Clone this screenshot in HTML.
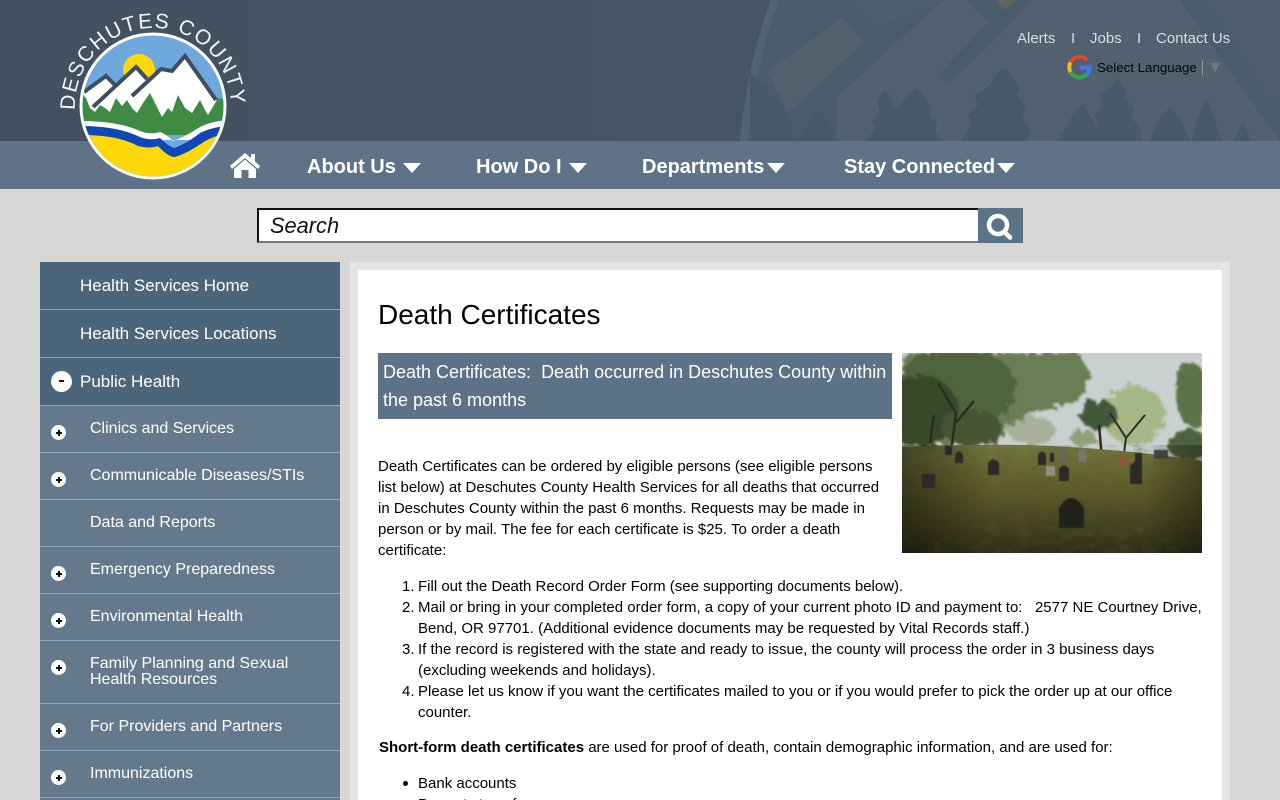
<!DOCTYPE html>
<html lang="en"><head><meta charset="utf-8"><title>Death Certificates</title>
<style>
html,body{margin:0;padding:0;width:1280px;height:800px;overflow:hidden;background:#d7d7d5;font-family:"Liberation Sans",sans-serif;color:#000}
#w{position:relative;width:1280px;height:800px;overflow:hidden}
.a{position:absolute;white-space:nowrap}
a{color:inherit;text-decoration:none}
#hdr{position:absolute;left:0;top:0;width:1280px;height:141px;background:linear-gradient(90deg,#43505f 0,#465464 55%,#4c5c6b 100%);overflow:hidden}
#nav{position:absolute;left:0;top:141px;width:1280px;height:48px;background:#5f7287}
.n{position:absolute;top:154px;font-size:20px;font-weight:bold;color:#fff;line-height:26px;white-space:nowrap}
.tri{position:absolute;top:163px;width:0;height:0;border-left:9px solid transparent;border-right:9px solid transparent;border-top:10px solid #fff}
.top{position:absolute;top:29.500px;font-size:15px;line-height:18px;color:#d8dee4;white-space:nowrap}
.s{position:absolute;left:40px;width:300px;box-sizing:border-box;border-bottom:1px solid #8fa6bb;color:#fff}
.s1{background:#4b667b;height:48px;font-size:17px;line-height:47px;padding-left:40px}
.s2{background:#65798d;font-size:16px;padding-left:50px;line-height:16px;padding-top:15px}
.p{position:absolute;left:51px;width:15px;height:15px;border-radius:50%;background:#fff}
.p:before{content:"";position:absolute;left:4.500px;top:6.500px;width:6px;height:2px;background:#111}
.p:after{content:"";position:absolute;left:6.500px;top:4.500px;width:2px;height:6px;background:#111}
.t{position:absolute;font-size:15px;line-height:21px;white-space:nowrap}
</style></head><body><div id="w">

<div id="hdr">
<svg width="1280" height="141" style="position:absolute;left:0;top:0">
<path d="M775 0Q752 60 744 141H1280V0Z" fill="#4a5c6c"/>
<path d="M775 0Q752 60 744 141" fill="none" stroke="#526373" stroke-width="8"/>
<path d="M767 72L842 18L864 42L788 113Z" fill="#53616f"/>
<path d="M837 97L943 0H967L988 23L935 78L950 83L1030 5L1035 0H1180L1263 118L1280 141H837Z" fill="#52606f"/>
<path d="M850 0L880 25L943 0Z" fill="#4c5e6e"/>
<path d="M995 0H1016L1005 10Z" fill="#5d6660"/>
<path d="M1205 0H1280V100L1270 100Z" fill="#4c5c6b"/>
<path d="M750 141V72L767 88L772 100L778 97L782 108L785 114L790 122L797 141Z" fill="#465966"/>
<path d="M798 141L812 118L820 108L827 120L838 141Z" fill="#465966"/>
<path d="M867 141L875 128L872 120L880 112L877 100L885 90L892 100L893 110L900 106L908 95L917 88L925 98L932 108L930 116L937 122L935 132L944 141Z" fill="#465966"/>
<path d="M960 141L972 125L968 115L978 105L975 95L990 85L998 72L1005 68L1014 78L1020 88L1017 95L1026 108L1022 118L1030 128L1027 141Z" fill="#465966"/>
<path d="M1058 141L1068 125L1072 115L1084 104L1092 120L1097 130L1100 141Z" fill="#485a67"/>
<path d="M1095 141L1098 125L1094 115L1102 105L1100 96L1110 88L1118 78L1126 90L1125 98L1134 108L1132 118L1141 130V141Z" fill="#485a67"/>
<path d="M1150 141L1156 125L1170 106L1182 122L1190 141Z" fill="#485a67"/>
<path d="M1192 141L1198 118L1207 98L1214 118L1222 141Z M1233 141L1243 122L1252 141Z" fill="#485a67"/>
</svg>
</div>
<div id="nav"></div>

<a class="top" style="left:1017px">Alerts</a>
<span class="top" style="left:1071px">I</span>
<a class="top" style="left:1090px">Jobs</a>
<span class="top" style="left:1137px">I</span>
<a class="top" style="left:1156px">Contact Us</a>

<svg class="a" style="left:1067px;top:55px" width="25" height="25" viewBox="0 0 25 25">
<path d="M20 5A10 10 0 0 0 3.500 7.500" fill="none" stroke="#e8481f" stroke-width="4"/>
<path d="M3.500 7.500A10 10 0 0 0 3.500 17" fill="none" stroke="#f6b80b" stroke-width="4"/>
<path d="M3.500 17A10 10 0 0 0 19 20" fill="none" stroke="#35a74d" stroke-width="4"/>
<path d="M19 20Q22.500 17 22.500 12.500H12.500" fill="none" stroke="#3b7fe6" stroke-width="4"/>
</svg>
<div class="a" style="left:1097px;top:59px;font-size:13.300px;line-height:17px;color:#050505">Select Language</div>
<div class="a" style="left:1202px;top:60px;width:1px;height:15px;background:#8e989f"></div>
<div class="a" style="left:1210px;top:63px;width:0;height:0;border-left:5px solid transparent;border-right:5px solid transparent;border-top:10px solid #70767a"></div>

<svg class="a" style="left:50px;top:0" width="210" height="190" viewBox="50 0 210 190">
<defs>
<clipPath id="c"><circle cx="153" cy="106" r="70.500"/></clipPath>
<path id="arc" d="M75.100 110A78 78 0 1 1 230.200 117"/>
</defs>
<text font-family="Liberation Sans,sans-serif" font-size="21" letter-spacing="1.500" fill="#f4f6f8"><textPath href="#arc">DESCHUTES COUNTY</textPath></text>
<circle cx="153" cy="106" r="73.500" fill="#fff"/>
<g clip-path="url(#c)">
<rect x="80" y="30" width="150" height="150" fill="#6fa8dc"/>
<circle cx="139" cy="70" r="16" fill="#ffd809"/>
<path d="M84 92L106 76L117 86L136 67L148 80L161 69L172 71L185 56L220 105V120H84Z" fill="#fff"/>
<path d="M84 92L106 76L116 86M93 107L136 67L147 79M132 96L161 69L172 71L185 56L216 100" fill="none" stroke="#3d4e62" stroke-width="4"/>
<path d="M80 92L86 98L90 108L95 112L100 105L105 108L110 112L116 98L122 106L127 100L132 108L137 113L143 103L150 93L156 105L162 117L168 108L172 112L178 95L185 108L192 113L200 100L205 110L208 115L214 105L218 98L228 100V135H80Z" fill="#3f8b43"/>
<path d="M80 121Q118 121 140 131Q150 135 160 132Q166 134 173 141Q185 137 200 127Q212 121 228 120V140H80Z" fill="#fff"/>
<path d="M80 126Q118 126 140 137Q150 141 160 138Q168 146 174 148Q186 144 200 133Q212 127 228 126V185H80Z" fill="#0f47b4"/>
<path d="M80 135Q118 135 138 146Q150 149 158 146Q168 157 175 157Q188 153 202 143Q214 135 228 134V185H80Z" fill="#ffd809"/>
</g>
</svg>

<svg class="a" style="left:229px;top:152px" width="32" height="27" viewBox="0 0 32 27">
<path d="M16 1L1 14L3 17L16 6L29 17L31 14L26 9.500V2H22V6Z" fill="#fff"/>
<path d="M5 17L16 7.500L27 17V26H19.500V18H12.500V26H5Z" fill="#fff"/>
</svg>

<a class="n" style="left:307px">About Us</a><div class="tri" style="left:403px"></div>
<a class="n" style="left:476px">How Do I</a><div class="tri" style="left:569px"></div>
<a class="n" style="left:642px">Departments</a><div class="tri" style="left:767px"></div>
<a class="n" style="left:844px">Stay Connected</a><div class="tri" style="left:997px"></div>

<div class="a" style="left:257px;top:208px;width:721px;height:35px;box-sizing:border-box;background:#fff;border-top:2px solid #111;border-left:2px solid #111;border-bottom:2px solid #777"></div>
<div class="a" style="left:270px;top:212px;font-size:21.800px;font-style:italic;line-height:27px;color:#111">Search</div>
<div class="a" style="left:978px;top:208px;width:45px;height:35px;background:#5a7389"></div>
<svg class="a" style="left:983px;top:211px" width="32" height="30" viewBox="0 0 32 30">
<circle cx="15" cy="14" r="9" fill="none" stroke="#fff" stroke-width="4.500"/>
<path d="M21.500 21L27 26.500" stroke="#fff" stroke-width="4.500" stroke-linecap="round"/>
</svg>

<a class="s s1" style="top:262px">Health Services Home</a>
<a class="s s1" style="top:310px">Health Services Locations</a>
<a class="s s1" style="top:358px">Public Health</a>
<a class="s s2" style="top:406px;height:47px">Clinics and Services</a>
<a class="s s2" style="top:453px;height:47px">Communicable Diseases/STIs</a>
<a class="s s2" style="top:500px;height:47px">Data and Reports</a>
<a class="s s2" style="top:547px;height:47px">Emergency Preparedness</a>
<a class="s s2" style="top:594px;height:47px">Environmental Health</a>
<a class="s s2" style="top:641px;height:63px">Family Planning and Sexual<br>Health Resources</a>
<a class="s s2" style="top:704px;height:47px">For Providers and Partners</a>
<a class="s s2" style="top:751px;height:47px">Immunizations</a>
<div class="s s2" style="top:798px;height:2px;padding:0;border:0"></div>

<div class="a" style="left:51px;top:371px;width:21px;height:21px;border-radius:50%;background:#fff"></div>
<div class="a" style="left:59px;top:380px;width:5px;height:2px;background:#111"></div>
<div class="p" style="top:425px"></div>
<div class="p" style="top:472px"></div>
<div class="p" style="top:566px"></div>
<div class="p" style="top:613px"></div>
<div class="p" style="top:660px"></div>
<div class="p" style="top:723px"></div>
<div class="p" style="top:770px"></div>

<div class="a" style="left:350px;top:262px;width:880px;height:538px;background:#e4e4e3"></div>
<div class="a" style="left:358px;top:270px;width:864px;height:530px;background:#fff"></div>

<div class="a" style="left:378px;top:298px;font-size:28px;line-height:34px">Death Certificates</div>
<div class="a" style="left:378px;top:353px;width:514px;height:66px;background:#5c7287"></div>
<div class="a" style="left:383px;top:358px;font-size:18px;line-height:28px;color:#fff">Death Certificates:&nbsp; Death occurred in Deschutes County within<br>the past 6 months</div>

<svg class="a" style="left:902px;top:353px" width="300" height="200" viewBox="0 0 300 200">
<defs>
<linearGradient id="g" x1="0" x2="0" y1="0" y2="1"><stop offset="0" stop-color="#74773f"/><stop offset=".45" stop-color="#5a5a2a"/><stop offset="1" stop-color="#2e2d18"/></linearGradient>
<linearGradient id="gs" x1="0" x2="1" y1="0" y2="0"><stop offset="0" stop-color="#000" stop-opacity=".4"/><stop offset=".3" stop-color="#000" stop-opacity="0"/><stop offset=".8" stop-color="#000" stop-opacity="0"/><stop offset="1" stop-color="#000" stop-opacity=".35"/></linearGradient>
<filter id="b" x="-20%" y="-20%" width="140%" height="140%"><feTurbulence type="fractalNoise" baseFrequency=".12" numOctaves="3" seed="4"/><feDisplacementMap in="SourceGraphic" scale="14"/><feGaussianBlur stdDeviation="1"/></filter>
<filter id="n" x="0" y="0" width="100%" height="100%"><feTurbulence type="fractalNoise" baseFrequency=".07 .14" numOctaves="3" seed="9"/><feColorMatrix values="0 0 0 0 0.1 0 0 0 0 0.09 0 0 0 0 0.02 1.6 0 0 0 -0.65"/></filter>
<filter id="b2"><feGaussianBlur stdDeviation=".6"/></filter>
</defs>
<rect width="300" height="200" fill="#c9d0cf"/>
<g filter="url(#b)">
<path d="M0 0H178L190 25L170 50L150 55L130 60L110 75L90 92H0Z" fill="#6a7d55"/>
<ellipse cx="130" cy="78" rx="24" ry="14" fill="#a9b09a"/>
<ellipse cx="55" cy="35" rx="60" ry="40" fill="#4f633d"/>
<ellipse cx="18" cy="58" rx="38" ry="36" fill="#394a2c"/>
<ellipse cx="70" cy="75" rx="30" ry="18" fill="#465535"/>
<ellipse cx="232" cy="62" rx="31" ry="30" fill="#a8b788"/>
<ellipse cx="197" cy="62" rx="19" ry="15" fill="#43583a"/>
<ellipse cx="290" cy="42" rx="16" ry="32" fill="#5b7347"/>
<ellipse cx="286" cy="92" rx="20" ry="15" fill="#4d643c"/>
<ellipse cx="181" cy="85" rx="12" ry="9" fill="#8da275"/>
</g>
<g fill="none" stroke="#2d2c20">
<path d="M50 92L54 60L36 30M52 72L72 48M28 90L32 62" stroke-width="2.500"/>
<path d="M222 100L224 85L208 60M224 85L243 62" stroke-width="2"/>
<path d="M200 106L197 72" stroke-width="2.500"/>
</g>
<path d="M0 94Q90 90 150 93Q230 97 300 108V200H0Z" fill="url(#g)"/>
<rect y="92" width="300" height="108" fill="#000" filter="url(#n)" opacity=".5"/>
<rect y="92" width="300" height="108" fill="url(#gs)"/>
<g filter="url(#b2)" fill="#2a2b25">
<path d="M157 175V155Q169 135 182 155V175Z" fill="#22241c"/>
<path d="M86 122V110Q91 103 97 110V122Z"/><path d="M53 110V102Q57 95 61 102V110Z"/>
<path d="M43 102V93H50V102Z"/><path d="M20 135V121H33V135Z"/>
<path d="M136 112V102Q140 95 144 102V112Z"/><path d="M157 128V116Q162 109 167 116V128Z"/>
<path d="M228 131V113L233 108V100H240V131Z"/>
<path d="M148 109V100H152V109Z"/>
<path d="M157 109V98Q161 94 165 98V109Z" fill="#65675a"/>
<path d="M176 109V98Q180 94 184 98V109Z" fill="#787a68"/>
<path d="M217 114V102H225V114Z" fill="#8d5a38"/>
<path d="M252 106V97H266V106Z" fill="#45433a"/>
<path d="M144 123V113H153V123Z" fill="#8f917c"/>
</g>
</svg>

<div class="t" style="left:378px;top:456px">Death Certificates can be ordered by eligible persons (see eligible persons<br>list below) at Deschutes County Health Services for all deaths that occurred<br>in Deschutes County within the past 6 months. Requests may be made in<br>person or by mail. The fee for each certificate is $25. To order a death<br>certificate:</div>

<div class="t" style="left:402px;top:576px">1.<br>2.<br><br>3.<br><br>4.</div>
<div class="t" style="left:418px;top:576px">Fill out the Death Record Order Form (see supporting documents below).<br>Mail or bring in your completed order form, a copy of your current photo ID and payment to: &nbsp; 2577 NE Courtney Drive,<br>Bend, OR 97701. (Additional evidence documents may be requested by Vital Records staff.)<br>If the record is registered with the state and ready to issue, the county will process the order in 3 business days<br>(excluding weekends and holidays).<br>Please let us know if you want the certificates mailed to you or if you would prefer to pick the order up at our office<br>counter.</div>

<div class="t" style="left:379px;top:737px"><b>Short-form death certificates</b> are used for proof of death, contain demographic information, and are used for:</div>

<div class="a" style="left:403px;top:781px;width:5px;height:5px;border-radius:50%;background:#000"></div>
<div class="t" style="left:418px;top:773px">Bank accounts<br>Property transfers</div>
</div></body></html>
